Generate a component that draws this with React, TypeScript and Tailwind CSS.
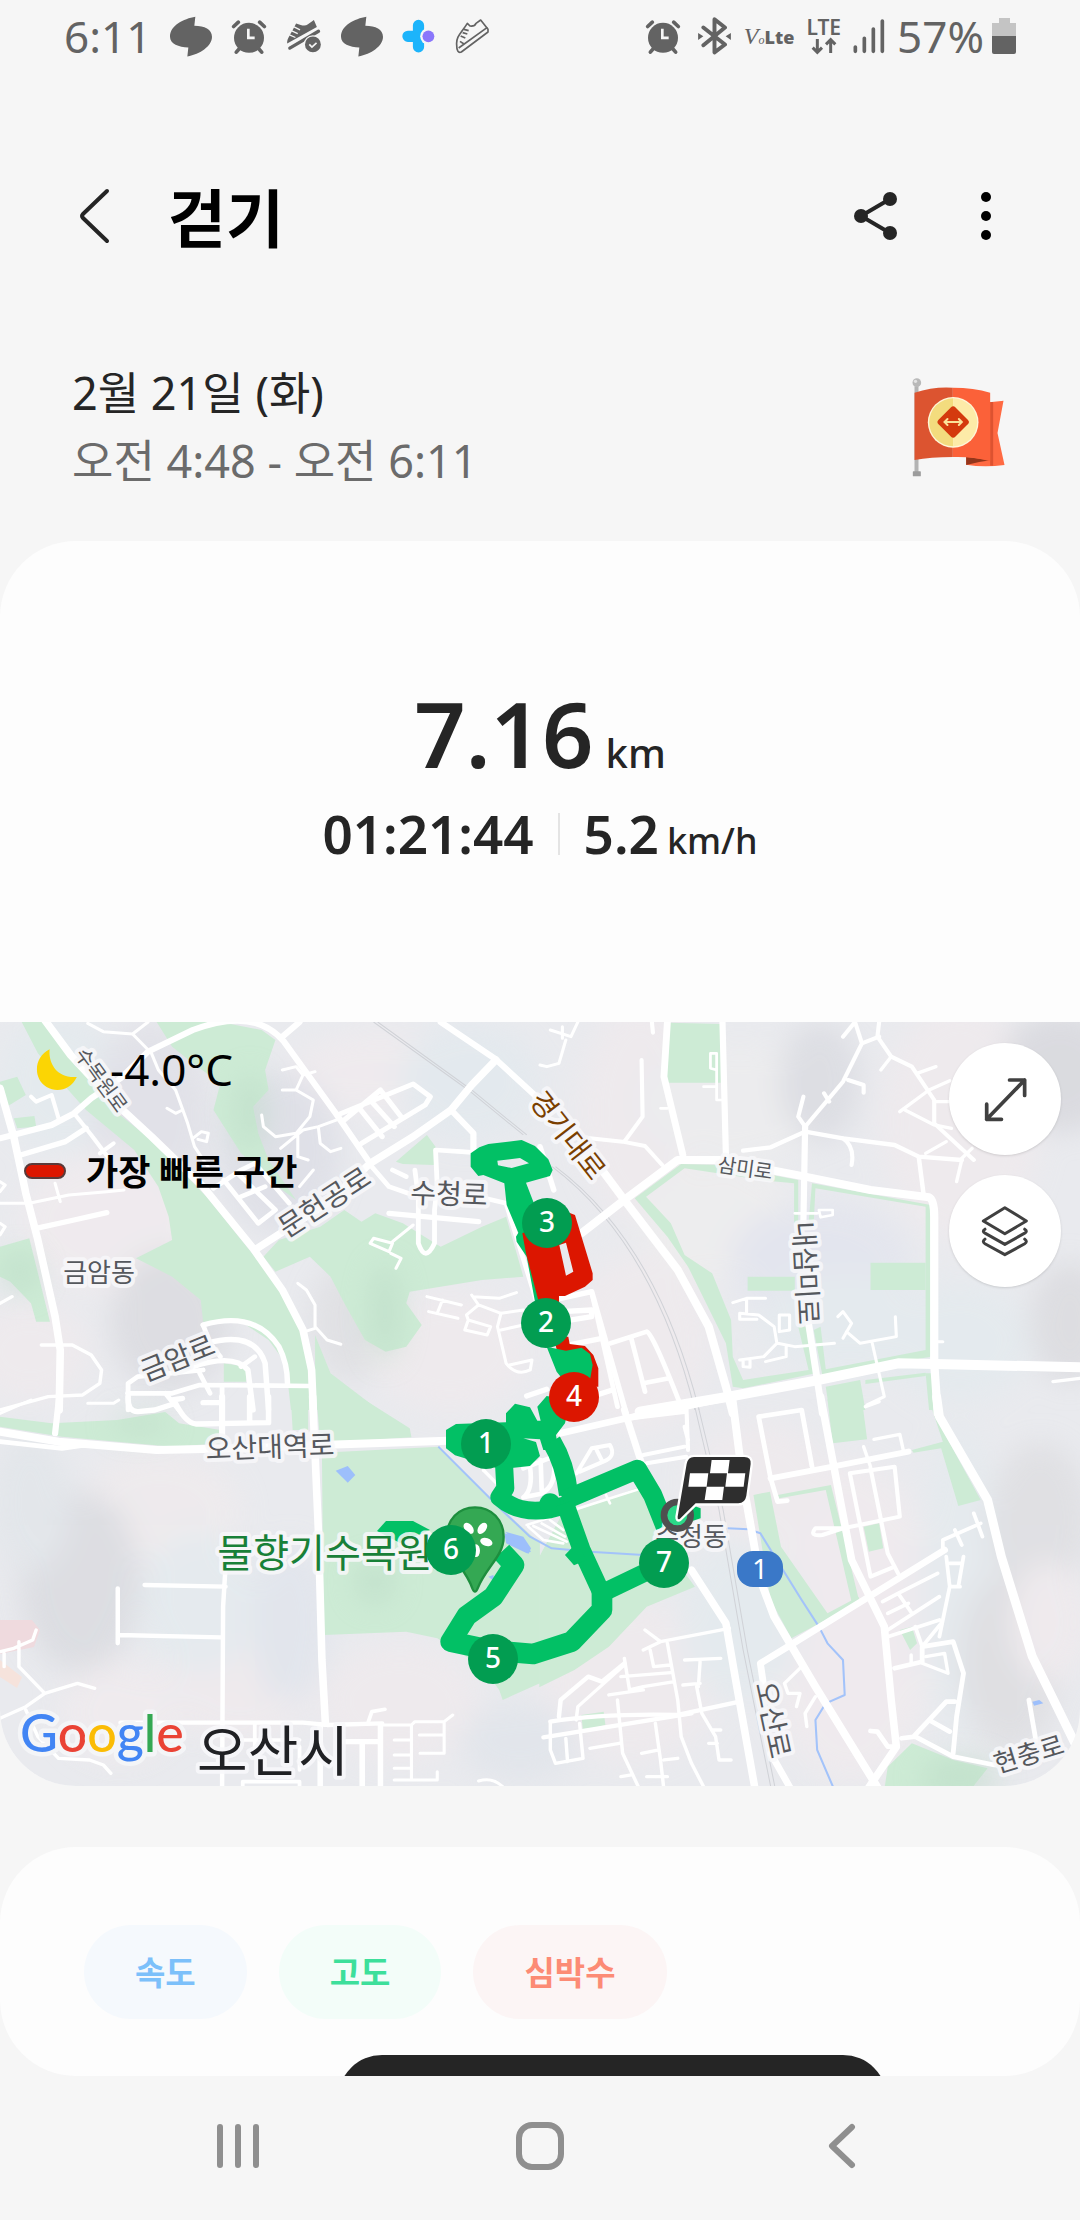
/**
 * Workout detail screen: walking summary, route map and chart filters.
 */

import { type ReactNode } from 'react';

interface MapTile {
  name: string;
  transform: string;
  parks: string[];
  roads: [number, string][];
  rails?: string[];
  water?: string[];
  streams?: string[];
}

// Each tile keeps its own local units, the transform puts it on the 1080x764 canvas.
const TILES: MapTile[] = [
  {
    name: 'nw',
    transform: 'translate(0 -12) scale(0.3443 0.3333)',
    parks: [
      'M60 30 L130 30 L330 300 L440 390 L600 560 L740 740 L830 860 L890 980 L900 1200 L845 1200 L830 1060 L780 990 L700 935 L590 935 L583 870 L500 800 L395 745 L500 690 L490 620 L460 530 L390 420 L250 300 L190 230 L110 130Z',
      'M455 36 H640 L760 60 L800 90 L770 180 L780 240 L735 290 L750 370 L780 450 L860 570 L820 540 L700 430 L620 300 L640 220 L560 160 L500 110Z',
      'M765 740 L810 690 L930 650 L1000 600 L1050 635 L1090 610 L1170 640 L1280 710 L1400 650 L1470 620 L1520 800 L1400 810 L1190 845 L1180 880 L1225 945 L1180 1010 L1120 1025 L1060 990 L1000 880 L960 800 L900 740 L800 785Z',
      'M1150 455 L1240 375 L1265 410 L1260 465 L1170 462Z',
      'M0 215 L50 200 L75 255 L20 290 L0 240Z M40 325 L100 318 L105 350 L50 355Z',
      'M0 710 L85 685 L145 935 L105 935 L90 880 L30 815 L0 800Z',
      'M915 975 L960 1090 L1100 1200 H915Z',
      'M650 1060 L715 1070 V1115 H650Z',
    ],
    roads: [
      [22, 'M130 30 L205 135 L330 275 L440 380 L590 530 L735 715 L820 840 L880 960 L905 1080 L910 1200'],
      [22, 'M0 235 L40 380 L75 550 L110 690 L160 920 L175 1020 L172 1200'],
      [18, 'M0 385 L150 345 L215 310 L265 265 L350 205 L430 125 L560 60 Q740 -10 825 95 L975 310 L1075 460'],
      [22, 'M740 720 L950 580 L1075 460 L1200 380 L1310 300 L1370 225 L1440 150'],
      [18, 'M1280 36 L1440 148 L1600 300 M820 80 L870 36 M1310 300 L1375 370 V420'],
      [16, 'M60 435 L190 395 L250 355 M105 655 L215 630 L310 608 M1130 610 L1390 635'],
      [15, 'M980 315 L1200 222 L1250 260 L1235 285 L1050 400 M1040 290 L1110 380 M1075 270 L1145 350 M1000 330 L1105 240 L1165 320'],
      [14, 'M1270 530 L1265 420 L1340 425 L1410 430 M1080 470 L1130 530 L1200 555 L1390 560 L1470 580 L1560 880'],
      [14, 'M1205 480 L1215 560 V700 Q1235 760 1262 700 V600 L1270 530 M1140 480 L1180 500'],
      [14, 'M620 535 L700 480 M650 510 L750 640 L800 600 L690 490 M700 480 L740 460 L840 580 M700 560 L770 530'],
      [12, 'M215 310 L265 375 L320 450 M330 400 L290 430 M90 260 L105 275 L150 255 L170 325'],
      [9, 'M255 40 L300 65 L385 72 L440 130 L460 180 L510 240 L545 340 L565 410 L610 480 M385 72 L430 36'],
      [9, 'M560 385 L585 365 L605 370 L600 395 L575 388 M485 295 L510 310 L530 300'],
      [9, 'M820 180 L860 170 L880 195 L860 240 L910 270 L900 320 L860 370 L800 380 L765 350 L760 315 M860 240 L820 240 M880 195 L915 185'],
      [9, 'M815 415 L880 360 L925 350 L990 325 M865 370 V440 L895 450 M925 355 L930 400 L960 425 L990 415 M870 530 L910 480'],
      [9, 'M1075 700 L1085 685 L1140 700 L1130 725Z M1140 695 L1200 645 M1135 730 L1165 745 L1150 775'],
      [9, 'M865 820 L890 840 L915 885 V950 L950 990 L990 1003 M915 955 L885 965'],
      [9, 'M1240 860 L1340 885 M1245 905 L1330 925 M1285 870 L1270 910 M1370 855 L1390 885 L1455 910 L1520 900 M1375 860 L1450 865 L1500 848 M1390 885 L1355 915 L1360 930 L1425 950 L1415 975 L1350 960 L1360 930'],
      [9, 'M1455 910 L1445 950 L1470 1060 Q1500 1100 1540 1080 L1545 1050 L1480 1065 M1455 960 L1520 945'],
      [10, 'M120 1005 H210 L265 1035 L295 1080 L290 1120 L240 1155 L140 1160 L0 1200 M0 880 L35 860'],
      [9, 'M0 580 L85 580 L200 555 L310 545 L360 540 M160 520 L175 575 M0 515 L15 525 L0 545 M0 640 L15 650 L0 675'],
      [16, 'M590 945 Q740 900 810 1010 Q835 1060 835 1120 M600 1000 Q740 960 770 1060 L780 1200 M560 1070 Q680 1030 720 1080 L735 1200'],
      [14, 'M372 1200 V1120 L400 1100 L590 1080 M370 1150 H500 L580 1125 L900 1128 M590 945 L610 1000 L640 1040 M580 1090 L610 1150 M645 1130 V1200 M480 1150 L520 1200 M700 1070 L740 1040'],
    ],
    rails: ['M1085 36 L1360 240 L1520 375', 'M1097 36 L1370 240 L1530 375'],
  },
  {
    name: 'ne',
    transform: 'translate(540 -12) scale(0.3443 0.3333)',
    parks: [
      'M375 38 L525 42 V218 H370 L362 140Z',
      'M275 565 L410 462 L520 465 L750 510 V640 H738 V520 L660 512 L420 475 L308 560 L380 640 L420 735 L500 790 L555 930 L560 1040 L590 1110 L780 1080 L750 950 H772 L800 1090 L590 1135 L560 1130 L540 1000 L430 770 L370 680Z',
      'M790 520 L1135 585 V1040 L820 1095 L795 960 L815 950 L830 1078 L1120 1020 V590 L800 535 L795 640 H780Z',
      'M960 758 H1120 V840 H960Z M603 800 H740 V842 H603Z',
      'M830 1130 L930 1110 L945 1200 H840Z M1120 1090 H1140 V1200 H1130Z M945 1110 L1120 1088 V1098 L945 1122Z',
    ],
    roads: [
      [20, 'M370 36 L360 200 L415 435'],
      [18, 'M530 36 L540 440 M770 350 L765 640'],
      [24, 'M120 670 L245 570 L400 450 L520 450 L770 500 L960 540 L1130 562 Q1145 570 1145 620 V1060 L1155 1210'],
      [24, 'M180 480 L245 570 L400 780 L490 950 L540 1130 L560 1210'],
      [20, 'M780 940 L820 1210'],
      [30, 'M290 1205 L560 1158 L800 1112 L1040 1060 L1145 1062 L1568 1072'],
      [12, 'M770 350 L880 215 L935 100 L915 36 M770 350 L750 320 L765 260 M880 80 L915 36 M935 100 L985 80 M895 210 L940 225 V248 M825 250 L840 275'],
      [13, 'M590 422 L670 412 L770 365 L880 385 L1030 405 L1100 440 L1225 450 M1100 440 L1115 560'],
      [12, 'M985 36 L980 80 L1020 140 L1080 170 L1145 270 V340 L1260 450 M880 385 Q915 410 905 465'],
      [10, 'M1045 305 L1130 240 L1190 212 M1060 300 L1145 345 L1195 355 M1120 430 L1180 395 M1225 450 L1210 515 M1220 450 L1255 415 M1095 190 L1150 170 M1145 275 L1190 275 M990 180 L1020 140'],
      [12, 'M145 385 L240 395 L305 408 L355 465 M295 150 L298 320 L245 395 M325 36 L328 68'],
      [8, 'M495 175 V130 H513 V180Z M513 180 V270 H530 M475 230 H513 M350 295 H370'],
      [8, 'M740 610 H805 M810 600 H850 V615 L815 622Z'],
      [9, 'M560 878 L600 865 H655 M600 865 V910 M580 910 L635 915 L680 950 L688 1000 L650 1040 L580 1050 M580 910 V928 H630 M690 1000 L740 1010 L855 1000 M655 1055 L715 1040 V1010 M695 915 H725 V960 L695 965Z M590 1050 V1070 L610 1072 V1050'],
      [9, 'M865 920 L880 905 L905 940 L880 985 M890 965 L930 1000 L1035 980 L1032 920 M965 1000 L1000 1160 L950 1185 M1145 995 H1170'],
      [16, 'M60 865 L150 845 L250 1210 M60 935 L150 920 V900 L60 905 M60 1010 L180 985 M90 1180 L210 1140 M0 410 L40 540'],
      [14, 'M205 1000 L310 965 Q325 965 410 1190 M265 985 L305 1145 M300 1120 L375 1105 M150 845 L225 1190'],
      [9, 'M30 60 L90 80 L110 36 M75 90 L55 160 L20 170 L0 165 M65 50 V85'],
      [10, 'M1490 1115 L1568 1105'],
    ],
    rails: ['M35 470 Q330 700 450 1200', 'M45 470 Q340 700 462 1200'],
  },
  {
    name: 'sw',
    transform: 'translate(0 378) scale(0.3443 0.3333)',
    parks: [
      'M0 50 L150 70 L340 60 L480 36 L520 70 L640 90 V130 L500 140 L180 110 L0 80Z',
      'M845 0 H895 V90 H850Z M920 0 H1060 L1190 85 L1195 112 L930 130Z',
      'M935 158 L1275 140 L1440 310 L1568 430 V850 L1460 900 L1450 870 L1400 800 L1270 715 L1180 695 L940 705Z',
    ],
    roads: [
      [24, 'M0 95 L170 125 L455 150 L700 145 L930 135 L1300 122'],
      [14, 'M0 125 L180 145 L250 135'],
      [22, 'M908 -10 L925 400 L935 780 L945 970'],
      [18, 'M172 -10 L160 100 M645 -10 V110'],
      [16, 'M372 -10 Q370 35 400 35 L450 30 L510 10 Q540 70 570 72 L780 68 V-10 M725 -10 V60 M500 0 L530 -5 M590 8 H640'],
      [9, 'M255 10 H330 L345 0 M0 40 L90 0'],
      [13, 'M655 500 L648 620 L645 1170 M420 555 L655 560 M342 565 V730 M345 705 L640 712 M350 968 H880 L950 975 L1110 970'],
      [10, 'M0 755 L40 745 L95 720 L105 690 M55 725 V800 L130 880 L75 920 L0 955 M130 880 L225 850 L275 865 M12 760 V800 M75 930 L110 1010 L170 1075 L260 1080 L300 1095 L322 1120'],
      [16, 'M1105 975 V1170 M1000 1025 H1105 M1052 1025 V1170 M930 975 V1170'],
      [11, 'M1070 965 L1080 935 L1118 928 M740 970 V1060 M700 1020 H870 M705 1170 V1145 H870 V1170 M870 1040 V1110'],
      [9, 'M1110 975 H1195 V1135 M1145 1020 H1195 M1145 1065 H1195 M1145 1105 H1195 M1145 1140 H1270 V1115 M1195 975 L1205 965 H1290 L1315 945 M1290 965 V1060 H1220 M1218 1005 H1285 M1390 1143 Q1430 1130 1460 1160'],
    ],
    water: ['M975 212 L1010 198 L1032 225 L1010 248Z', 'M1465 400 L1520 415 L1542 455 L1530 460 L1470 430Z'],
  },
  {
    name: 'se',
    transform: 'translate(540 378) scale(0.3443 0.3333)',
    parks: [
      'M-2 470 L60 350 L290 260 L330 350 L350 420 L450 560 L310 620 L200 740 L100 810 L-2 862Z',
      'M620 285 L668 275 L700 440 L835 640 L925 590 L930 605 L730 715 L670 600Z',
      'M690 285 L845 255 L880 400 L925 595 L905 605 L830 270 L695 295Z',
      'M835 -2 H935 L950 118 L850 130Z',
      'M1080 150 L1170 125 L1130 0 H1145 L1180 110 L1280 300 L1215 318 L1165 145 L1085 158Z',
      'M940 380 L985 370 L997 445 L955 455Z M1045 690 L1080 680 L1095 730 L1075 750Z M120 945 L185 935 L190 975 L125 992Z',
      'M1080 1030 L1200 1080 L1300 1105 L1250 1170 H1000 L1010 1100Z',
    ],
    roads: [
      [26, 'M1152 -10 L1160 50 L1300 300 L1340 470 L1430 770 L1568 1060'],
      [23, 'M558 -10 L590 250 L640 540 L680 650 L800 860 L985 1170'],
      [22, 'M815 -10 L905 480 L1000 680 L1020 900 L1035 1040 L950 1170 M440 510 L540 670 L570 850 L625 1170'],
      [20, 'M1175 450 L940 600 L720 740 L640 790 L650 860 M670 1060 L730 1170'],
      [20, 'M60 100 L250 55 L420 20 L560 -10 M245 30 L295 190'],
      [18, 'M670 235 L850 200 L1070 155'],
      [14, 'M635 50 L760 30 L790 200 M635 50 L670 235 L690 305 L718 302'],
      [12, 'M880 385 L800 385 Q780 410 820 405 L880 385 L1045 350 L1030 200 L900 220 L960 530 L1030 500 M960 205 L1010 460 L1040 520'],
      [10, 'M940 140 L960 200 M970 118 L1045 103 L1055 150 M945 20 L985 5'],
      [12, 'M265 50 L320 25 L425 15 L430 150 M265 55 L425 35 M300 165 L420 140 M310 190 L425 170 M420 80 L430 120'],
      [11, 'M1170 455 V420 L1280 370 M1180 470 L1190 560 L1160 710 M1230 470 L1215 560 M1190 490 H1225 M1195 560 H1220 M1260 340 L1285 410 M1205 390 L1225 435'],
      [11, 'M1010 690 L1160 590 M995 605 L1040 580 L1080 640 M1040 580 L1155 520 M1010 640 L1070 610 M1010 710 L1160 660 M1090 680 L1110 740 L1165 670'],
      [14, 'M1110 740 L1200 725 L1230 820 L1210 950 L1200 1060 M1030 805 L1110 785 V740'],
      [10, 'M1110 790 L1185 820 L1175 760 L1120 770 M1078 765 V790'],
      [14, 'M1085 1010 L1180 905 H1205 M1130 960 L1190 995 M1050 1015 L1090 1010 L1200 1070 L1320 1095 M960 993 L980 995 L1010 1040 H1038 M1420 900 L1440 1020'],
      [10, 'M305 690 L350 725 L550 685 M350 725 L300 750 M320 750 L330 800 L378 795 M370 730 L400 900 L410 1010 L440 1090 L480 1170 M245 775 L260 870 L300 860 L390 845 M235 830 L380 818 M200 885 L300 870'],
      [13, 'M55 950 L60 900 L140 830 L180 845 L245 790 M30 965 Q180 940 400 945 L580 905 M10 1012 L440 940'],
      [10, 'M105 960 L110 920 L240 800 M30 970 V1050 L45 1090 L125 1075 L115 970 M75 1015 L80 1085 M225 900 L240 1060 L290 1170 M335 970 L350 1080 L360 1170 M145 1045 L230 1030 M295 1060 L345 1050 M310 1130 H370 M360 1080 L400 1075 M235 1130 L265 1125'],
      [10, 'M420 780 L525 775 M465 785 L460 860 M415 855 L465 850 M455 860 L470 940 L510 1010 L520 1080 H555 M500 990 H525 M490 1030 H515'],
      [10, 'M760 800 L710 850 L720 880 H755 L745 920 M800 890 L770 940 L775 980'],
    ],
    rails: ['M445 0 L520 330 L590 750 L672 1170', 'M455 0 L532 330 L602 750 L684 1170'],
    water: ['M1430 905 L1450 900 L1462 910 L1435 917Z'],
    streams: ['M545 385 L605 388 L640 400 L700 500 L760 600 L810 680 L835 730 L880 780 L885 885 L830 910 L800 960 L805 1050 L855 1170'],
  },
  {
    name: 'center',
    transform: 'translate(430 358) scale(0.3333)',
    parks: [],
    roads: [
      [14, 'M300 260 Q310 330 280 352 L330 342 Q385 320 370 230 L280 265 M332 240 L335 330'],
      [8, 'M290 435 L635 325 M295 440 L340 480 L400 490 M310 438 L410 485 M335 430 L405 470 M360 420 L400 450 M528 345 L540 370'],
      [12, 'M440 280 L485 205 L540 195 Q560 230 520 245 L450 275 M500 210 L515 240'],
      [16, 'M290 48 L350 28'],
      [10, 'M160 270 L200 310'],
    ],
    water: ['M225 455 L280 470 L303 505 L295 522Z', 'M175 590 L190 585 L195 605Z'],
    streams: ['M25 200 L215 390 L300 470 L365 505 L480 515 L640 525'],
  },
];

// Soft terrain patches under the roads: cx, cy, rx, ry, fill
const TERRAIN: [number, number, number, number, string][] = [
  [380, 50, 90, 40, '#f1ebee'],
  [60, 60, 60, 70, '#e3eaee'],
  [150, 90, 60, 90, '#dfdfe6'],
  [280, 130, 60, 80, '#dcdde5'],
  [110, 200, 90, 70, '#f1ebee'],
  [170, 300, 60, 70, '#d9d9de'],
  [30, 330, 60, 50, '#f0eaed'],
  [350, 300, 40, 60, '#dedee1'],
  [450, 330, 80, 60, '#f0eaed'],
  [470, 60, 70, 60, '#e2e9ee'],
  [640, 90, 60, 110, '#f0eaed'],
  [740, 80, 100, 60, '#ededee'],
  [820, 60, 40, 60, '#d9dae0'],
  [720, 200, 80, 60, '#efeeee'],
  [820, 240, 90, 60, '#e2e4ee'],
  [960, 100, 80, 120, '#f0eaed'],
  [1060, 50, 60, 60, '#d6d6db'],
  [1070, 300, 40, 60, '#d9d9dd'],
  [960, 320, 70, 60, '#e3eaee'],
  [640, 320, 70, 90, '#f0eaed'],
  [850, 300, 90, 50, '#e3eaee'],
  [160, 490, 80, 60, '#f0ebed'],
  [80, 560, 60, 90, '#d8d9de'],
  [30, 480, 40, 70, '#e1e5e9'],
  [120, 690, 60, 50, '#f1ebee'],
  [240, 650, 80, 70, '#f0eaed'],
  [200, 580, 60, 70, '#e3eaee'],
  [290, 600, 40, 80, '#e0e4ec'],
  [400, 680, 80, 60, '#f0eaed'],
  [630, 660, 90, 80, '#f0eaed'],
  [850, 600, 90, 160, '#f1ebee'],
  [760, 460, 70, 60, '#f0eaed'],
  [740, 600, 60, 80, '#e3eaee'],
  [960, 560, 40, 160, '#e4eaee'],
  [1040, 500, 50, 80, '#dddde0'],
  [1010, 640, 50, 90, '#dcdcdf'],
  [1050, 600, 40, 60, '#f0eaed'],
  [520, 720, 60, 40, '#e0e4ea'],
];

interface MapLabel {
  text: string;
  x: number;
  y: number;
  rotate: number;
  className: string;
}

const LABELS: MapLabel[] = [
  { text: '수목원로', x: 100, y: 59, rotate: 54, className: 'fill-[#55585d] text-[20px]' },
  { text: '금암동', x: 99, y: 251, rotate: 0, className: 'fill-[#55585d] text-[26px]' },
  { text: '문헌공로', x: 325, y: 181, rotate: -33, className: 'fill-[#55585d] text-[28px]' },
  { text: '수청로', x: 449, y: 173, rotate: 2, className: 'fill-[#55585d] text-[28px]' },
  { text: '금암로', x: 178, y: 337, rotate: -22, className: 'fill-[#55585d] text-[28px]' },
  { text: '경기대로', x: 567, y: 114, rotate: 52, className: 'fill-[#7a3f00] text-[28px]' },
  { text: '삼미로', x: 745, y: 148, rotate: 8, className: 'fill-[#55585d] text-[20px]' },
  { text: '내삼미로', x: 805, y: 251, rotate: 87, className: 'fill-[#55585d] text-[28px]' },
  { text: '오산대역로', x: 270, y: 426, rotate: -2, className: 'fill-[#55585d] text-[28px]' },
  { text: '수청동', x: 691, y: 515, rotate: 0, className: 'fill-[#55585d] text-[26px]' },
  { text: '오산로', x: 772, y: 698, rotate: 78, className: 'fill-[#55585d] text-[28px]' },
  { text: '현충로', x: 1029, y: 733, rotate: -17, className: 'fill-[#55585d] text-[26px]' },
  { text: '물향기수목원', x: 325, y: 531, rotate: 0, className: 'fill-[#188038] text-[39px]' },
  { text: '오산시', x: 273, y: 728, rotate: 0, className: 'fill-[#202124] text-[55px]' },
];

const MARKERS = [
  { km: 1, x: 486, y: 422, fastest: false },
  { km: 2, x: 546, y: 301, fastest: false },
  { km: 3, x: 547, y: 201, fastest: false },
  { km: 4, x: 574, y: 375, fastest: true },
  { km: 5, x: 493, y: 637, fastest: false },
  { km: 6, x: 451, y: 528, fastest: false },
  { km: 7, x: 664, y: 541, fastest: false },
];

const FILTERS = [
  { label: '속도', className: 'bg-[#f5f9fd] text-[#7cc0fa]' },
  { label: '고도', className: 'bg-[#f3fdf9] text-[#3ddf9b]' },
  { label: '심박수', className: 'bg-[#fcf5f5] text-[#fc8b75]' },
];

function SwirlIcon() {
  return (
    <svg viewBox="384 44 126 122" className="h-[41px] w-[42px] fill-[#636363]">
      <path d="M460 46 C425 52 384 72 384 106 C384 128 410 137 439 138 L436 165 C475 158 510 134 510 106 C510 84 488 73 457 73Z" />
    </svg>
  );
}

function AlarmIcon() {
  return (
    <svg viewBox="570 50 108 110" className="h-[37px] w-9">
      <g stroke="#636363" strokeWidth="11" strokeLinecap="round">
        <path d="M578 75 L592 62 M670 75 L656 62 M586 152 L598 138 M662 152 L650 138" />
      </g>
      <circle cx="624" cy="109" r="45" fill="#636363" />
      <path d="M622 82 V109 H641" fill="none" stroke="#f6f6f6" strokeWidth="8" />
    </svg>
  );
}

function ShoeCheckIcon() {
  return (
    <svg viewBox="738 52 108 106" className="h-[35px] w-9">
      <path d="M741 126 C740 110 752 100 768 66 L782 70 Q796 74 804 68 L822 55 L831 76Z" fill="#636363" />
      <path d="M749 140 L836 89" stroke="#636363" strokeWidth="10" strokeLinecap="round" />
      <path d="M748 100 L766 108 M755 88 L773 96 M762 76 L780 85" stroke="#f6f6f6" strokeWidth="4" />
      <circle cx="819" cy="129" r="28" fill="#f6f6f6" />
      <circle cx="819" cy="129" r="24" fill="#636363" />
      <path d="M808 129 L816 137 L830 124" fill="none" stroke="#f6f6f6" strokeWidth="5" />
    </svg>
  );
}

function PlusDotIcon() {
  return (
    <svg viewBox="1082 54 100 102" className="h-[34px] w-[33px]">
      <path d="M1100 106 H1150 M1132 73 V138" stroke="#1cb4fb" strokeWidth="34" strokeLinecap="round" />
      <circle cx="1162" cy="106" r="25" fill="#f6f6f6" />
      <circle cx="1162" cy="106" r="18" fill="#8a76fb" />
    </svg>
  );
}

function ShoeIcon() {
  return (
    <svg viewBox="1250 50 108 108" className="size-9" fill="none" stroke="#636363" strokeWidth="5" strokeLinejoin="round">
      <path d="M1258 130 C1256 105 1272 95 1290 66 L1298 74 Q1312 76 1316 66 L1330 56 L1352 84 V92 L1272 152 Q1258 158 1258 130Z" />
      <path d="M1264 140 L1350 78 M1268 120 L1280 128 M1280 84 L1294 88 M1276 94 L1290 98 M1270 104 L1284 110" />
    </svg>
  );
}

function BluetoothIcon() {
  return (
    <svg viewBox="232 46 104 116" className="ml-1 h-[38px] w-[35px]">
      <path d="M250 78 L316 130 L284 154 V53 L316 78 L250 132" fill="none" stroke="#636363" strokeWidth="12" strokeLinejoin="round" strokeLinecap="round" />
      <path d="M234 95 L250 105 L234 116Z M334 95 L318 105 L334 116Z" fill="#636363" />
    </svg>
  );
}

function StatusBar() {
  return (
    <header className="flex h-[72px] items-center justify-between px-16 text-[#636363]">
      <div className="flex items-center gap-[19px]">
        <span className="text-[44px] leading-none">6:11</span>
        <SwirlIcon />
        <AlarmIcon />
        <ShoeCheckIcon />
        <SwirlIcon />
        <PlusDotIcon />
        <ShoeIcon />
      </div>
      <div className="flex items-center gap-3">
        <AlarmIcon />
        <BluetoothIcon />
        <span className="flex items-baseline leading-none">
          <span className="font-['Liberation_Serif'] text-[24px] italic">V</span>
          <span className="font-['Liberation_Serif'] text-[12px] italic">o</span>
          <span className="text-[18px] font-black">Lte</span>
        </span>
        <span className="flex flex-col items-center">
          <span className="text-[21px] leading-5 font-semibold">LTE</span>
          <svg viewBox="556 114 80 54" className="h-[18px] w-7" fill="none" stroke="#636363" strokeWidth="9">
            <path d="M576 120 V160 M562 146 L576 160 L590 146 M616 162 V122 M602 136 L616 122 L630 136" />
          </svg>
        </span>
        <svg viewBox="684 54 96 106" className="h-9 w-8" stroke="#636363" strokeWidth="11" strokeLinecap="round">
          <path d="M691 140 V153 M718 114 V153 M745 86 V153 M772 62 V153" />
        </svg>
        <span className="flex items-center gap-2 text-[44px] leading-none">
          57%
          <svg viewBox="0 0 24 36" className="h-9 w-6">
            <path d="M7 0 H18 V5 H24 V18 H0 V5 H7Z" fill="#c4c4c4" />
            <path d="M0 18 H24 V34 Q24 36 22 36 H2 Q0 36 0 34Z" fill="#636363" />
          </svg>
        </span>
      </div>
    </header>
  );
}

function IconButton({ label, className = '', children }: { label: string; className?: string; children: ReactNode }) {
  return (
    <button type="button" aria-label={label} className={`flex items-center justify-center ${className}`}>
      {children}
    </button>
  );
}

function TitleBar() {
  return (
    <div className="flex items-center pt-[84px] pr-16 pl-16">
      <IconButton label="뒤로" className="h-[120px] w-[60px]">
        <svg viewBox="0 0 32 56" className="h-14 w-8" fill="none" stroke="#252525" strokeWidth="4" strokeLinecap="round" strokeLinejoin="round">
          <path d="M29 3 L5 26 Q3 28 5 30 L29 53" />
        </svg>
      </IconButton>
      <h1 className="ml-11 flex-1 pt-1 text-[63px] leading-[72px] font-bold text-black">걷기</h1>
      <IconButton label="공유" className="size-[60px]">
        <svg viewBox="0 0 46 50" className="h-[50px] w-[46px]" fill="#252525">
          <path d="M37 8 L8 25 L37 42" fill="none" stroke="#252525" strokeWidth="4" />
          <circle cx="37" cy="8" r="7" />
          <circle cx="8" cy="25" r="7" />
          <circle cx="37" cy="42" r="7" />
        </svg>
      </IconButton>
      <IconButton label="더보기" className="ml-[50px] size-[60px]">
        <svg viewBox="0 0 10 48" className="h-12 w-[10px]" fill="#000">
          <circle cx="5" cy="5" r="5" />
          <circle cx="5" cy="24" r="5" />
          <circle cx="5" cy="43" r="5" />
        </svg>
      </IconButton>
    </div>
  );
}

function GoalFlag() {
  return (
    <svg viewBox="62 50 284 300" className="h-[100px] w-[95px]">
      <path d="M297 126 L339 121 L321 218 L342 314 Q280 322 227 313 V290Z" fill="#ff6a42" />
      <path d="M299 125 H308 V316 H299Z" fill="#dd5230" />
      <path d="M227 290 L299 300 Q260 305 227 314Z" fill="#94361b" />
      <rect x="72" y="78" width="12" height="258" fill="#b4b4b4" />
      <rect x="67" y="333" width="24" height="15" rx="2" fill="#9c9c9c" />
      <circle cx="79" cy="67" r="13" fill="#b9b9b9" />
      <circle cx="75" cy="63" r="5" fill="#e4e4e4" />
      <path d="M72 97 Q130 78 187 82 V290 Q120 290 72 299Z" fill="#dc5430" />
      <path d="M187 82 Q250 82 299 97 V303 Q250 288 187 290Z" fill="#fb6139" />
      <circle cx="188" cy="186" r="76" fill="#fff6d8" />
      <path d="M188 114 A72 72 0 0 0 188 258Z" fill="#f3dc7e" />
      <path d="M188 114 A72 72 0 0 1 188 258Z" fill="#fdeba8" />
      <rect x="152" y="149" width="72" height="72" rx="10" transform="rotate(45 188 185)" fill="#d43a0e" />
      <path d="M164 185 H212 M171 176 L162 185 L171 194 M205 176 L214 185 L205 194" fill="none" stroke="#fbe29a" strokeWidth="6" strokeLinecap="round" />
    </svg>
  );
}

function Route() {
  return (
    <>
      <g transform="translate(420 98) scale(0.3333)">
        <path
          fillRule="evenodd"
          fill="#02c065"
          d="M205 72 L305 60 L345 78 L385 118 L398 150 L390 168 L318 188 L340 245 L400 545 H345 L320 410 L290 365 L288 350 L295 338 L260 255 L253 190 L190 165 L175 168 L152 140 V100 L178 82Z M232 122 L300 114 L327 130 L275 144 L234 136Z"
        />
        <path
          fillRule="evenodd"
          fill="#dc1600"
          d="M307 340 L440 275 L465 285 L518 460 V480 L495 500 L435 528 H417 V560 H360 L318 400Z M418 375 L438 368 L460 455 L438 467Z"
        />
        <path fill="#dc1600" d="M400 650 H445 L449 672 L495 678 L520 705 L535 745 V800 H440Z" />
        <path fill="#02c065" d="M380 680 L438 692 L485 683 L510 702 L518 735 L510 780 H430 L410 755Z" />
      </g>
      <g transform="translate(430 358) scale(0.3333)" stroke="#02c065" fill="none" strokeLinejoin="round">
        <path
          stroke="none"
          fill="#02c065"
          d="M78 132 L228 127 V100 L255 71 L300 82 L322 122 H332 L322 80 L350 48 L420 60 L405 130 L378 165 L385 210 L340 210 L330 178 L280 175 L318 186 L330 228 L300 258 L245 264 H200 L75 226 L48 205 V150Z"
        />
        <path strokeWidth="54" d="M222 250 L226 325 L208 352 C245 385 290 400 360 388 L420 372" />
        <circle cx="360" cy="372" r="32" fill="#02c065" stroke="none" />
        <path strokeWidth="58" d="M365 185 Q405 250 416 345" />
        <path strokeWidth="58" strokeLinecap="butt" d="M400 362 L622 268 L668 345 L706 440" />
        <path strokeWidth="54" d="M405 370 L455 510 L515 640 L640 580" />
        <path stroke="none" fill="#02c065" d="M405 525 L440 488 L470 540 L432 556Z M770 370 L812 385 V415 L780 425Z" />
        <path strokeWidth="62" d="M516 630 V690 L425 785 L310 822 L190 812 L62 785 L110 708 L190 650 L252 555 L215 515" />
      </g>
      <path fill="#02c065" d="M377 509 L386 499 H413 L430 508 L400 521Z" />
    </>
  );
}

function GardenPin() {
  return (
    <g transform="translate(430 358) scale(0.3333)">
      <path
        d="M135 382 C185 382 221 420 221 470 C221 530 168 560 143 625 Q135 645 127 625 C105 560 50 530 50 470 C50 420 85 382 135 382Z"
        fill="#34a853"
        stroke="#1e8e3e"
        strokeWidth="7"
      />
      <g fill="#fff">
        <ellipse cx="116" cy="445" rx="12" ry="19" transform="rotate(-40 116 445)" />
        <ellipse cx="157" cy="445" rx="12" ry="19" transform="rotate(35 157 445)" />
        <ellipse cx="169" cy="486" rx="12" ry="19" transform="rotate(108 169 486)" />
        <ellipse cx="138" cy="512" rx="12" ry="19" />
      </g>
    </g>
  );
}

function FinishFlag() {
  return (
    <g transform="translate(430 358) scale(0.3333)">
      <circle cx="742" cy="406" r="40" fill="#2bd988" stroke="#4f4f4f" strokeWidth="20" />
      <path
        d="M792 231 H943 Q964 231 962 252 L949 348 Q945 370 925 370 H797 L750 416 Q742 422 743 410 L770 252 Q774 231 792 231Z"
        fill="#2e2e2e"
        stroke="#fff"
        strokeWidth="14"
        strokeLinejoin="round"
        className="[paint-order:stroke]"
      />
      <path
        fill="#fff"
        d="M845 240 H899 L894 280 H840Z M780 280 H835 L830 320 H775Z M891 280 H946 L941 320 H886Z M830 320 H882 L877 360 H824Z"
      />
    </g>
  );
}

function RouteMap() {
  return (
    <svg viewBox="0 0 1080 764" className="block w-full" role="img" aria-label="경로 지도">
      <defs>
        <filter id="soften" x="-50%" y="-50%" width="200%" height="200%">
          <feGaussianBlur stdDeviation="14" />
        </filter>
      </defs>
      <rect width="1080" height="764" fill="#e9eaee" />
      <g filter="url(#soften)" opacity="0.75">
        {TERRAIN.map(([cx, cy, rx, ry, fill], i) => (
          <ellipse key={i} cx={cx} cy={cy} rx={rx} ry={ry} fill={fill} />
        ))}
      </g>
      <path d="M0 598 H32 L40 608 L34 625 L0 632Z" fill="#efdade" />
      <path d="M0 638 L22 655 L17 666 L0 655Z" fill="#f6e3dc" />

      {TILES.map((tile) => (
        <g key={tile.name} transform={tile.transform} fill="#cdebd5">
          {tile.parks.map((d) => (
            <path key={d} d={d} />
          ))}
        </g>
      ))}
      <g filter="url(#soften)" fill="#b9d8c4" opacity="0.5">
        <ellipse cx="385" cy="290" rx="16" ry="50" />
        <ellipse cx="250" cy="90" rx="16" ry="40" />
        <ellipse cx="375" cy="560" rx="20" ry="22" />
        <ellipse cx="140" cy="402" rx="30" ry="10" />
        <ellipse cx="20" cy="250" rx="20" ry="20" />
        <ellipse cx="960" cy="755" rx="40" ry="20" />
      </g>
      {TILES.map((tile) => (
        <g key={tile.name} transform={tile.transform} fill="none" strokeLinejoin="round">
          {tile.rails?.map((d) => (
            <path key={d} d={d} stroke="#d0d2d7" strokeWidth="3" />
          ))}
          {tile.streams?.map((d) => (
            <path key={d} d={d} stroke="#a3c3fa" strokeWidth="6" />
          ))}
          {tile.water?.map((d) => (
            <path key={d} d={d} fill="#9dbffb" />
          ))}
        </g>
      ))}
      {TILES.map((tile) => (
        <g key={tile.name} transform={tile.transform} fill="none" stroke="#fff" strokeLinecap="round" strokeLinejoin="round">
          {tile.roads.map(([width, d]) => (
            <path key={d} d={d} strokeWidth={width} />
          ))}
        </g>
      ))}

      <Route />

      <g
        textAnchor="middle"
        dominantBaseline="central"
        stroke="#f8f8fa"
        strokeOpacity="0.85"
        strokeWidth="8"
        strokeLinejoin="round"
        className="font-['Noto_Sans_CJK_KR',sans-serif] [paint-order:stroke]"
      >
        {LABELS.map((label) => (
          <text key={label.text} dy="-3" transform={`translate(${label.x} ${label.y}) rotate(${label.rotate})`} className={label.className}>
            {label.text}
          </text>
        ))}
      </g>

      <rect x="737" y="529" width="46" height="36" rx="16" fill="#3a78c8" />
      <text x="760" y="557" textAnchor="middle" className="fill-white text-[28px]">
        1
      </text>

      <GardenPin />
      {MARKERS.map((marker) => (
        <g key={marker.km}>
          <circle cx={marker.x} cy={marker.y} r="25" fill={marker.fastest ? '#dc1600' : '#029d51'} />
          <text x={marker.x} y={marker.y + 9} textAnchor="middle" className="fill-white text-[28px] font-medium">
            {marker.km}
          </text>
        </g>
      ))}
      <FinishFlag />

      <text
        x="20"
        y="730"
        stroke="#f4f5f7"
        strokeWidth="9"
        strokeLinejoin="round"
        className="font-[Lato,sans-serif] text-[52px] font-medium [paint-order:stroke]"
      >
        <tspan fill="#4285f4">G</tspan>
        <tspan fill="#ea4335">o</tspan>
        <tspan fill="#fbbc04">o</tspan>
        <tspan fill="#4285f4">g</tspan>
        <tspan fill="#34a853">l</tspan>
        <tspan fill="#ea4335">e</tspan>
      </text>
    </svg>
  );
}

function MapSection() {
  return (
    <div className="relative">
      <RouteMap />
      <div className="absolute top-4 left-6 flex flex-col gap-10 text-black">
        <p className="flex h-[62px] items-center gap-8">
          <svg viewBox="108 124 122 128" className="ml-3 h-[43px] w-[42px]">
            <path d="M147 128 C143 165 165 215 228 210 C210 248 170 258 138 240 C95 212 102 150 147 128Z" fill="#fbd504" />
          </svg>
          <span className="text-[44px] leading-none">-4.0°C</span>
        </p>
        <p className="flex h-[62px] items-center gap-5">
          <span className="h-4 w-[42px] rounded-full border-2 border-[#5a3a3a] bg-[#dc1600]" />
          <span className="text-[35px] leading-none font-bold">가장 빠른 구간</span>
        </p>
      </div>
      <div className="absolute top-[21px] right-[19px] flex flex-col gap-5">
        <IconButton label="확대" className="size-28 rounded-full bg-white shadow-sm">
          <svg viewBox="1284 202 132 134" className="size-[45px]" fill="none" stroke="#404040" strokeWidth="11" strokeLinecap="round" strokeLinejoin="round">
            <path d="M1294 328 L1407 211 M1362 211 H1407 V257 M1294 283 V328 H1338" />
          </svg>
        </IconButton>
        <IconButton label="지도 유형" className="size-28 rounded-full bg-white shadow-sm">
          <svg viewBox="1278 588 145 155" className="h-[52px] w-12" fill="none" stroke="#404040" strokeWidth="9" strokeLinecap="round" strokeLinejoin="round">
            <path d="M1350 595 L1415 635 L1350 674 L1285 635Z" />
            <path d="M1290 660 Q1280 666 1290 672 L1350 706 L1410 672 Q1420 666 1410 660" />
            <path d="M1290 690 Q1280 698 1290 704 L1350 737 L1410 704 Q1420 698 1410 690" />
          </svg>
        </IconButton>
      </div>
    </div>
  );
}

function NavigationBar() {
  return (
    <nav className="grid h-36 grid-cols-3 items-center px-[87px] pb-1">
      <IconButton label="최근 앱">
        <svg viewBox="0 0 42 46" className="h-[46px] w-[42px]" stroke="#8f8f8f" strokeWidth="6" strokeLinecap="round">
          <path d="M3 4 V42 M21 4 V42 M39 4 V42" />
        </svg>
      </IconButton>
      <IconButton label="홈">
        <span className="size-12 rounded-2xl border-6 border-[#8f8f8f]" />
      </IconButton>
      <IconButton label="뒤로 가기">
        <svg viewBox="0 0 28 46" className="h-[46px] w-7" fill="none" stroke="#8f8f8f" strokeWidth="6" strokeLinecap="round" strokeLinejoin="round">
          <path d="M24 4 L4 23 L24 42" />
        </svg>
      </IconButton>
    </nav>
  );
}

export default function App() {
  return (
    <div className="min-h-screen bg-[#f6f6f6] font-['Noto_Sans','Noto_Sans_CJK_KR',sans-serif] text-[#252525]">
      <StatusBar />
      <TitleBar />

      <section className="flex items-center justify-between pt-[83px] pr-[74px] pb-[46px] pl-[72px] text-[45px] leading-[68px]">
        <div>
          <p>2월 21일 (화)</p>
          <p className="text-[#6b6b6b]">오전 4:48 - 오전 6:11</p>
        </div>
        <GoalFlag />
      </section>

      <section className="overflow-hidden rounded-[76px] bg-[#fdfdfd]">
        <div className="flex flex-col items-center gap-[21px] pt-[142px] pb-[158px]">
          <p className="flex h-[100px] items-baseline gap-3 leading-[100px]">
            <span className="text-[90px] font-semibold">7.16</span>
            <span className="text-[40px] font-medium">km</span>
          </p>
          <p className="flex h-[60px] items-baseline leading-[60px]">
            <span className="text-[53px] font-semibold">01:21:44</span>
            <span className="mx-6 h-[42px] w-[2px] self-center bg-[#e4e4e4]" />
            <span className="text-[53px] font-semibold">5.2</span>
            <span className="ml-2 text-[36px] font-medium">km/h</span>
          </p>
        </div>
        <MapSection />
      </section>

      <section className="relative mt-[61px] overflow-hidden rounded-[76px] bg-[#fdfdfd] px-[84px] pt-[78px] pb-[57px]">
        <div className="flex gap-8">
          {FILTERS.map((filter) => (
            <button
              key={filter.label}
              type="button"
              className={`h-[94px] rounded-full px-[51px] text-[33px] leading-none font-bold ${filter.className}`}
            >
              {filter.label}
            </button>
          ))}
        </div>
        <div className="absolute -bottom-[67px] left-[338px] h-[88px] w-[549px] rounded-full bg-[#252525]" />
      </section>

      <NavigationBar />
    </div>
  );
}
